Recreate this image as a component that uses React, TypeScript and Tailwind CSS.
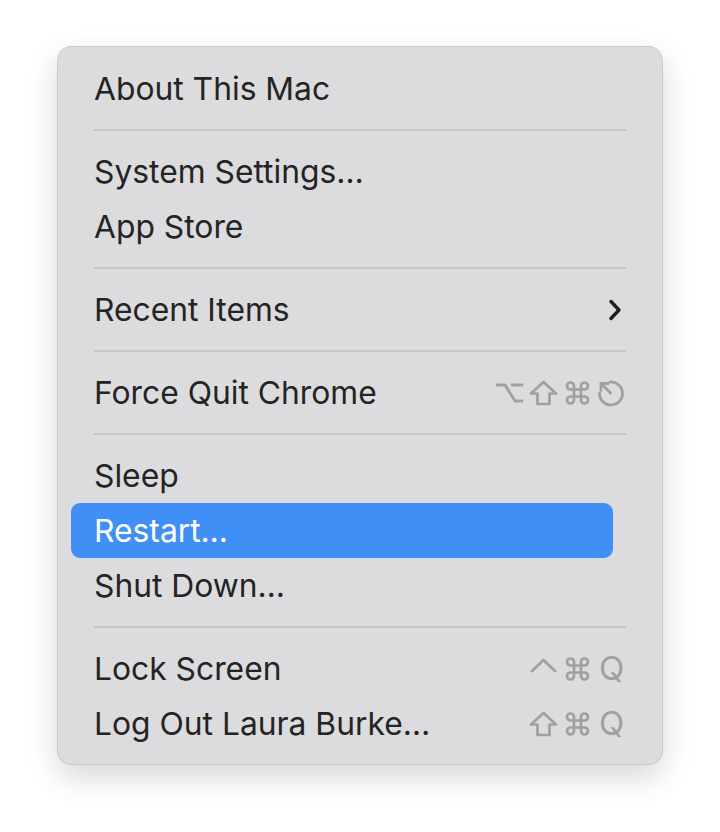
import { ReactNode } from "react";

const glyph = "h-[28px] w-[29px] text-[#a0a0a2]";

function OptionKey() {
  return (
    <svg viewBox="0 0 29 28" className={glyph} fill="none" stroke="currentColor" strokeWidth={2.8} strokeLinecap="round" strokeLinejoin="round">
      <path d="M2 6h8l10 16h7" />
      <path d="M17 6h10" />
    </svg>
  );
}

function ShiftKey() {
  return (
    <svg viewBox="0 0 29 28" className={glyph} fill="none" stroke="currentColor" strokeWidth={2.7} strokeLinejoin="round">
      <path d="M14.5 3 L27 14.5 H20.5 V25 H8.5 V14.5 H2 Z" />
    </svg>
  );
}

function CommandKey() {
  return (
    <svg viewBox="0 0 24 24" className={glyph} fill="none" stroke="currentColor" strokeWidth={2.3} strokeLinecap="round" strokeLinejoin="round">
      <path d="M15 6v12a3 3 0 1 0 3-3H6a3 3 0 1 0 3 3V6a3 3 0 1 0-3 3h12a3 3 0 1 0-3-3" />
    </svg>
  );
}

function EscapeKey() {
  return (
    <svg viewBox="0 0 29 28" className={glyph} fill="none" stroke="currentColor" strokeWidth={2.8} strokeLinecap="round" strokeLinejoin="round">
      <path d="M13 3 A11.5 11.5 0 1 1 2.5 14" />
      <path d="M4 4.5 L13.5 14" />
      <path d="M4 4.5 h7 M4 4.5 v7" />
    </svg>
  );
}

function ControlKey() {
  return (
    <svg viewBox="0 0 29 28" className={glyph} fill="none" stroke="currentColor" strokeWidth={2.8} strokeLinecap="round" strokeLinejoin="round">
      <path d="M3 16 L14.5 5 L26 16" />
    </svg>
  );
}

function QKey() {
  return <span className="text-[33px] leading-none text-[#a0a0a2]">Q</span>;
}

function Shortcut({ keys }: { keys: ReactNode[] }) {
  return (
    <div className="flex items-center gap-[5px]">
      {keys.map((k, i) => (
        <div key={i} className="flex w-[29px] justify-center">
          {k}
        </div>
      ))}
    </div>
  );
}

function Item({
  label,
  right,
  active,
}: {
  label: string;
  right?: ReactNode;
  active?: boolean;
}) {
  return (
    <div
      className={`flex h-[55px] items-center justify-between rounded-[9px] px-[23px] ${
        active ? "mr-[36px] bg-[#3f8ff6] text-white" : "text-[#242424]"
      }`}
    >
      <span className="text-[31.8px] leading-none">{label}</span>
      {right}
    </div>
  );
}

function Separator() {
  return (
    <div className="flex h-[28px] items-center px-[23px]">
      <div className="h-[2px] w-full bg-[#c6c6c8]" />
    </div>
  );
}

export default function App() {
  return (
    <div className="flex min-h-screen justify-center bg-white pt-[46px]" style={{ fontFamily: "Inter, 'Liberation Sans', sans-serif" }}>
      <div className="h-fit w-[606px] rounded-[14px] border border-[#cbcbcd] bg-[#dcdcde] px-[13px] pb-[13px] pt-[14px] shadow-[0_12px_30px_rgba(0,0,0,0.16)]">
        <Item label="About This Mac" />
        <Separator />
        <Item label="System Settings…" />
        <Item label="App Store" />
        <Separator />
        <Item
          label="Recent Items"
          right={
            <svg viewBox="0 0 14 22" className="mr-[4px] h-[22px] w-[14px] text-[#1e1e1e]" fill="none" stroke="currentColor" strokeWidth={3.4} strokeLinecap="round" strokeLinejoin="round">
              <path d="M3 2.5 L11 11 L3 19.5" />
            </svg>
          }
        />
        <Separator />
        <Item
          label="Force Quit Chrome"
          right={<Shortcut keys={[<OptionKey />, <ShiftKey />, <CommandKey />, <EscapeKey />]} />}
        />
        <Separator />
        <Item label="Sleep" />
        <Item label="Restart…" active />
        <Item label="Shut Down…" />
        <Separator />
        <Item
          label="Lock Screen"
          right={<Shortcut keys={[<ControlKey />, <CommandKey />, <QKey />]} />}
        />
        <Item
          label="Log Out Laura Burke…"
          right={<Shortcut keys={[<ShiftKey />, <CommandKey />, <QKey />]} />}
        />
      </div>
    </div>
  );
}
